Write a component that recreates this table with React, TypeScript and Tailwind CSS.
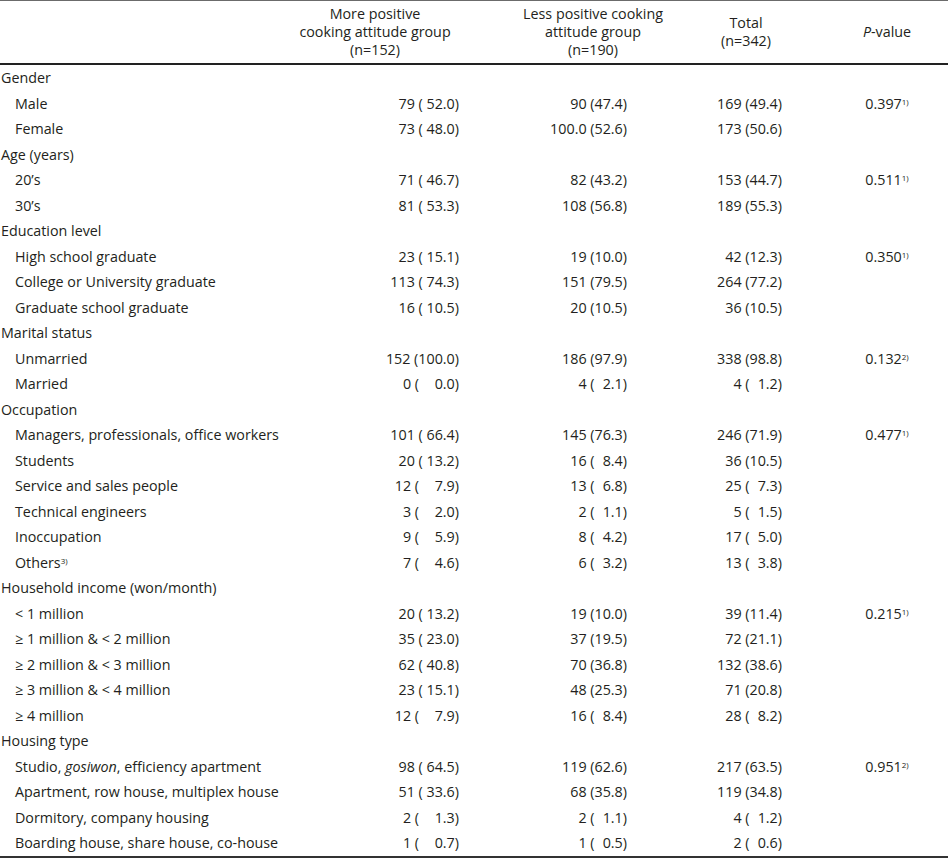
import React from "react";

type Row = {
  label: React.ReactNode;
  cat?: boolean;
  a?: string;
  b?: string;
  c?: string;
  p?: string;
  s?: string;
};

// figure space keeps single-digit percentages lined up
const F = "\u2007";

const rows: Row[] = [
  { label: "Gender", cat: true },
  { label: "Male", a: "79 ( 52.0)", b: "90 (47.4)", c: "169 (49.4)", p: "0.397", s: "1)" },
  { label: "Female", a: "73 ( 48.0)", b: "100.0 (52.6)", c: "173 (50.6)" },
  { label: "Age (years)", cat: true },
  { label: "20’s", a: "71 ( 46.7)", b: "82 (43.2)", c: "153 (44.7)", p: "0.511", s: "1)" },
  { label: "30’s", a: "81 ( 53.3)", b: "108 (56.8)", c: "189 (55.3)" },
  { label: "Education level", cat: true },
  { label: "High school graduate", a: "23 ( 15.1)", b: "19 (10.0)", c: "42 (12.3)", p: "0.350", s: "1)" },
  { label: "College or University graduate", a: "113 ( 74.3)", b: "151 (79.5)", c: "264 (77.2)" },
  { label: "Graduate school graduate", a: "16 ( 10.5)", b: "20 (10.5)", c: "36 (10.5)" },
  { label: "Marital status", cat: true },
  { label: "Unmarried", a: "152 (100.0)", b: "186 (97.9)", c: "338 (98.8)", p: "0.132", s: "2)" },
  { label: "Married", a: `0 ( ${F} 0.0)`, b: `4 (${F}2.1)`, c: `4 (${F}1.2)` },
  { label: "Occupation", cat: true },
  { label: "Managers, professionals, office workers", a: "101 ( 66.4)", b: "145 (76.3)", c: "246 (71.9)", p: "0.477", s: "1)" },
  { label: "Students", a: "20 ( 13.2)", b: `16 (${F}8.4)`, c: "36 (10.5)" },
  { label: "Service and sales people", a: `12 ( ${F} 7.9)`, b: `13 (${F}6.8)`, c: `25 (${F}7.3)` },
  { label: "Technical engineers", a: `3 ( ${F} 2.0)`, b: `2 (${F}1.1)`, c: `5 (${F}1.5)` },
  { label: "Inoccupation", a: `9 ( ${F} 5.9)`, b: `8 (${F}4.2)`, c: `17 (${F}5.0)` },
  {
    label: (
      <>
        Others<sup className="text-[8px]">3)</sup>
      </>
    ),
    a: `7 ( ${F} 4.6)`,
    b: `6 (${F}3.2)`,
    c: `13 (${F}3.8)`,
  },
  { label: "Household income (won/month)", cat: true },
  { label: "< 1 million", a: "20 ( 13.2)", b: "19 (10.0)", c: "39 (11.4)", p: "0.215", s: "1)" },
  { label: "≥ 1 million & < 2 million", a: "35 ( 23.0)", b: "37 (19.5)", c: "72 (21.1)" },
  { label: "≥ 2 million & < 3 million", a: "62 ( 40.8)", b: "70 (36.8)", c: "132 (38.6)" },
  { label: "≥ 3 million & < 4 million", a: "23 ( 15.1)", b: "48 (25.3)", c: "71 (20.8)" },
  { label: "≥ 4 million", a: `12 ( ${F} 7.9)`, b: `16 (${F}8.4)`, c: `28 (${F}8.2)` },
  { label: "Housing type", cat: true },
  {
    label: (
      <>
        Studio, <i>gosiwon</i>, efficiency apartment
      </>
    ),
    a: "98 ( 64.5)",
    b: "119 (62.6)",
    c: "217 (63.5)",
    p: "0.951",
    s: "2)",
  },
  { label: "Apartment, row house, multiplex house", a: "51 ( 33.6)", b: "68 (35.8)", c: "119 (34.8)" },
  { label: "Dormitory, company housing", a: `2 ( ${F} 1.3)`, b: `2 (${F}1.1)`, c: `4 (${F}1.2)` },
  { label: "Boarding house, share house, co-house", a: `1 ( ${F} 0.7)`, b: `1 (${F}0.5)`, c: `2 (${F}0.6)` },
];

const cols = "grid grid-cols-[300px_184px_218px_88px_1fr]";

export default function App() {
  return (
    <div className="w-[948px] h-[860px] bg-white text-[#231f20] text-[14.3px] font-['Open_Sans','Liberation_Sans',sans-serif] overflow-hidden">
      <div className="border-t-[1.5px] border-[#6b6b6b]">
        {/* header */}
        <div className={`${cols} h-[64px] border-b-2 border-[#222] items-center text-center leading-[18px] whitespace-nowrap`}>
          <div />
          <div className="flex flex-col items-center pr-[34px]">
            <span>More positive</span>
            <span>cooking attitude group</span>
            <span>(n=152)</span>
          </div>
          <div className="flex flex-col items-center">
            <span>Less positive cooking</span>
            <span>attitude group</span>
            <span>(n=190)</span>
          </div>
          <div className="flex flex-col items-center">
            <span>Total</span>
            <span>(n=342)</span>
          </div>
          <div className="pl-[36px]">
            <i>P</i>-value
          </div>
        </div>

        {/* body */}
        {rows.map((r, i) => (
          <div key={i} className={`${cols} h-[25.5px] items-center whitespace-pre`}>
            <div className={r.cat ? "pl-[1px]" : "pl-[15px]"}>{r.label}</div>
            <div className="text-right pr-[25px]">{r.a}</div>
            <div className="text-right pr-[75px]">{r.b}</div>
            <div className="text-right pr-[8px]">{r.c}</div>
            <div className="text-center pl-[36px]">
              {r.p}
              {r.s && <sup className="text-[8px]">{r.s}</sup>}
            </div>
          </div>
        ))}
        <div className="border-t-2 border-[#333]" />
      </div>
    </div>
  );
}
